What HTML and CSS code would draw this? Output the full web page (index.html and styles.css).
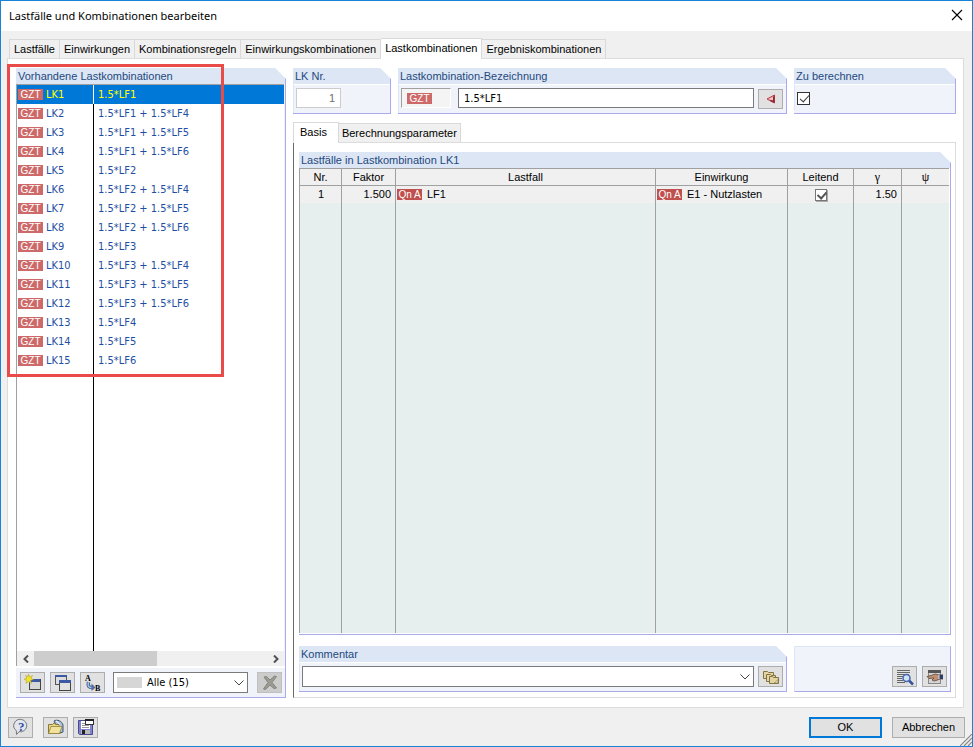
FILE: index.html
```html
<!DOCTYPE html>
<html lang="de">
<head>
  <meta charset="UTF-8">
  <meta name="viewport" content="width=device-width, initial-scale=1.0">
  <title>Lastfälle und Kombinationen bearbeiten</title>
  <link rel="stylesheet" href="styles.css">
</head>
<body>
  <div class="window">
    <header class="titlebar">
      <h1>Lastfälle und Kombinationen bearbeiten</h1>
      <button class="close" aria-label="Schließen">
        <svg width="12" height="12" viewBox="0 0 12 12"><path d="M1 1l10 10M11 1L1 11" stroke="#000" stroke-width="1.1" fill="none"/></svg>
      </button>
    </header>

    <nav class="tabs">
      <button class="tab">Lastfälle</button>
      <button class="tab">Einwirkungen</button>
      <button class="tab">Kombinationsregeln</button>
      <button class="tab">Einwirkungskombinationen</button>
      <button class="tab active">Lastkombinationen</button>
      <button class="tab">Ergebniskombinationen</button>
    </nav>

    <main class="page">
      <section class="group list-group">
        <h2>Vorhandene Lastkombinationen</h2>
        <div class="list">
          <table class="combos">
            <tr class="selected"><td><span class="badge">GZT</span>LK1</td><td>1.5*LF1</td></tr>
            <tr><td><span class="badge">GZT</span>LK2</td><td>1.5*LF1 + 1.5*LF4</td></tr>
            <tr><td><span class="badge">GZT</span>LK3</td><td>1.5*LF1 + 1.5*LF5</td></tr>
            <tr><td><span class="badge">GZT</span>LK4</td><td>1.5*LF1 + 1.5*LF6</td></tr>
            <tr><td><span class="badge">GZT</span>LK5</td><td>1.5*LF2</td></tr>
            <tr><td><span class="badge">GZT</span>LK6</td><td>1.5*LF2 + 1.5*LF4</td></tr>
            <tr><td><span class="badge">GZT</span>LK7</td><td>1.5*LF2 + 1.5*LF5</td></tr>
            <tr><td><span class="badge">GZT</span>LK8</td><td>1.5*LF2 + 1.5*LF6</td></tr>
            <tr><td><span class="badge">GZT</span>LK9</td><td>1.5*LF3</td></tr>
            <tr><td><span class="badge">GZT</span>LK10</td><td>1.5*LF3 + 1.5*LF4</td></tr>
            <tr><td><span class="badge">GZT</span>LK11</td><td>1.5*LF3 + 1.5*LF5</td></tr>
            <tr><td><span class="badge">GZT</span>LK12</td><td>1.5*LF3 + 1.5*LF6</td></tr>
            <tr><td><span class="badge">GZT</span>LK13</td><td>1.5*LF4</td></tr>
            <tr><td><span class="badge">GZT</span>LK14</td><td>1.5*LF5</td></tr>
            <tr><td><span class="badge">GZT</span>LK15</td><td>1.5*LF6</td></tr>
            <tr class="filler"><td></td><td></td></tr>
          </table>
          <div class="scrollbar">
            <button aria-label="Nach links"><svg width="6" height="8" viewBox="0 0 6 8"><path d="M5 0.5L1.5 4L5 7.5" fill="none" stroke="#505050" stroke-width="2"/></svg></button>
            <div class="track"><div class="thumb"></div></div>
            <button aria-label="Nach rechts"><svg width="6" height="8" viewBox="0 0 6 8"><path d="M1 0.5L4.5 4L1 7.5" fill="none" stroke="#505050" stroke-width="2"/></svg></button>
          </div>
        </div>
        <div class="list-tools">
          <button class="icon-btn" aria-label="Neu">
            <svg width="18" height="18" viewBox="0 0 18 18"><rect x="5.500" y="5.500" width="11" height="10" fill="#d6d6d6" stroke="#444"/><rect x="6" y="5" width="10" height="3" fill="#3b58a5"/><path d="M4.500 0l1 3 3-1.500-1.500 3 2.500 1-3 1 1 3-3-2-2.500 2 .5-3L0 5l3-.5L1.500 1.500l2.500 1z" fill="#f3e526" stroke="#a99a2c" stroke-width=".5"/></svg>
          </button>
          <button class="icon-btn" aria-label="Kopieren">
            <svg width="18" height="18" viewBox="0 0 18 18"><rect x="1.500" y="1.500" width="11" height="9" fill="#dcdcdc" stroke="#555"/><rect x="1" y="1" width="12" height="2" fill="#3b58a5"/><rect x="5.500" y="6.500" width="11" height="10" fill="#e1e1e1" stroke="#444"/><rect x="5" y="6" width="12" height="3" fill="#3b58a5"/></svg>
          </button>
          <button class="icon-btn" aria-label="Umbenennen">
            <svg width="18" height="18" viewBox="0 0 18 18"><text x="1" y="7" class="glyph">A</text><text x="11" y="17" class="glyph">B</text><path d="M4.500 8c-1 4 0 6 5 5.500" fill="none" stroke="#4c648f" stroke-width="3.500"/><path d="M4.500 8c-1 4 0 6 5 5.500" fill="none" stroke="#a9c0e6" stroke-width="1.500"/><path d="M7.500 9.500l4 4-4 3.500z" fill="#4c70ad"/></svg>
          </button>
          <div class="combo filter">
            <select aria-label="Filter"><option>Alle (15)</option></select>
            <span class="swatch"></span>
            <svg class="chevron" width="10" height="6" viewBox="0 0 10 6"><path d="M.5.5L5 5L9.500.5" fill="none" stroke="#444"/></svg>
          </div>
          <button class="icon-btn disabled" aria-label="Löschen" disabled>
            <svg width="18" height="18" viewBox="0 0 18 18"><path d="M3 3l2.500-.5L9 6l4.500-4 2 .5L11 8.500l4.500 5.500-2.500.5L9 11l-4.500 4.500-2-.5L7 8.500z" fill="#9b9b94" stroke="#85857e"/></svg>
          </button>
        </div>
      </section>

      <div class="details">
        <div class="row">
          <section class="group number-group">
            <h2><label for="lkNr">LK Nr.</label></h2>
            <div class="group-body">
              <input type="text" id="lkNr" class="number" value="1" disabled>
            </div>
          </section>
          <section class="group wide">
            <h2><label for="bezeichnung">Lastkombination-Bezeichnung</label></h2>
            <div class="group-body">
              <div class="type-box"><span class="badge">GZT</span></div>
              <input type="text" id="bezeichnung" class="name" value="1.5*LF1">
              <button class="icon-btn flat" aria-label="Übernehmen">
                <svg width="10" height="10" viewBox="0 0 10 10"><path d="M1 5L8.500 1V9z" fill="#eda3a3" stroke="#b9404a"/><path d="M8.500 1V9L4 7z" fill="#8e2632"/><path d="M3 5L7 3V6.500z" fill="#f6caca"/></svg>
              </button>
            </div>
          </section>
          <section class="group calc-group">
            <h2><label for="berechnen">Zu berechnen</label></h2>
            <div class="group-body">
              <input type="checkbox" id="berechnen" class="check" checked>
            </div>
          </section>
        </div>

        <nav class="tabs inner-tabs">
          <button class="tab active">Basis</button>
          <button class="tab">Berechnungsparameter</button>
        </nav>

        <div class="basis">
          <section class="group cases-group">
            <h2>Lastfälle in Lastkombination LK1</h2>
            <div class="cases-wrap">
              <table class="cases">
                <colgroup>
                  <col class="c-nr"><col class="c-faktor"><col><col class="c-einwirkung"><col class="c-leitend"><col class="c-gamma"><col class="c-psi">
                </colgroup>
                <thead>
                  <tr><th>Nr.</th><th>Faktor</th><th>Lastfall</th><th>Einwirkung</th><th>Leitend</th><th class="greek">γ</th><th class="greek">ψ</th></tr>
                </thead>
                <tbody>
                  <tr>
                    <td class="center">1</td>
                    <td class="num">1.500</td>
                    <td><span class="badge dark">Qn A</span>LF1</td>
                    <td><span class="badge dark">Qn A</span>E1 - Nutzlasten</td>
                    <td class="center"><input type="checkbox" class="check small" aria-label="Leitend" checked></td>
                    <td class="num">1.50</td>
                    <td></td>
                  </tr>
                  <tr class="filler"><td></td><td></td><td></td><td></td><td></td><td></td><td></td></tr>
                </tbody>
              </table>
            </div>
          </section>

          <div class="row">
            <section class="group wide">
              <h2><label for="kommentar">Kommentar</label></h2>
              <div class="group-body comment-body">
                <div class="combo">
                  <select id="kommentar"><option></option></select>
                  <svg class="chevron" width="10" height="6" viewBox="0 0 10 6"><path d="M.5.5L5 5L9.500.5" fill="none" stroke="#444"/></svg>
                </div>
                <button class="icon-btn" aria-label="Kommentare">
                  <svg width="18" height="18" viewBox="0 0 18 18"><g fill="#e3d5a3" stroke="#857442"><path d="M1.500 3.500h4l1 1h5v6h-10z"/><path d="M4.500 6.500h4l1 1h4v6h-9z"/><path d="M7.500 8.500h3l1 1h5v6h-9z"/></g><path d="M16 15h-3.500l3.500-3.500z" fill="#fff6c8" stroke="#857442" stroke-width=".7"/></svg>
                </button>
              </div>
            </section>
            <section class="group plain tools-group">
              <button class="icon-btn" aria-label="Details">
                <svg width="18" height="18" viewBox="0 0 18 18"><path d="M1 2.500h13M1 4.500h13M1 6.500h12M1 8.500h6M1 10.500h5M1 12.500h6M1 14.500h8" stroke="#666" stroke-width="1"/><path d="M13 12.500l4 4" stroke="#36549e" stroke-width="2.500"/><circle cx="10.500" cy="10" r="3.500" fill="#cfe2f6" stroke="#4767ae" stroke-width="1.500"/></svg>
              </button>
              <button class="icon-btn" aria-label="Einstellungen">
                <svg width="18" height="18" viewBox="0 0 18 18"><rect x="2.500" y="2.500" width="12" height="13" fill="#d5d5d5" stroke="#888"/><rect x="2" y="2" width="13" height="3" fill="#555"/><path d="M1 8.500L5 7.500 9 6l5 1v4l-4 1.500-2 .5-2-1 2-2-5 .5z" fill="#bd8f73" stroke="#63463a" stroke-width=".8"/><path d="M13 6.500l4 0v5l-4-.5z" fill="#2f3c68"/><path d="M13 6.500v4.500" stroke="#dde"/></svg>
              </button>
            </section>
          </div>
        </div>
      </div>
    </main>

    <footer class="footer">
      <button class="icon-btn help" aria-label="Hilfe">
        <svg width="18" height="18" viewBox="0 0 18 18"><path d="M9.500 1.500a6.500 6.200 0 1 1-2.500 12.200L4.500 16.500l-.2-4A6.500 6.200 0 0 1 9.500 1.500z" fill="#e2e6ee" stroke="#777"/><text x="6" y="13" class="question">?</text></svg>
      </button>
      <button class="icon-btn" aria-label="Öffnen">
        <svg width="18" height="18" viewBox="0 0 18 18"><path d="M7 3c3-2 8 0 9 4l0 7-3 1z" fill="#a9bfd8" stroke="#3d5474"/><path d="M9 3c3 1 4 4 4.500 8" fill="none" stroke="#fff"/><path d="M1.500 15.500v-9h4l1.500-1.500 2 1.500h3l1 9z" fill="#e6d583" stroke="#8a7837"/><path d="M1.500 15.500L4 8.500h11l-2.500 7z" fill="#f0e29a" stroke="#8a7837" stroke-width=".7"/></svg>
      </button>
      <button class="icon-btn" aria-label="Speichern">
        <svg width="18" height="18" viewBox="0 0 18 18"><path d="M1.500 2.500h14v14h-13l-1-1z" fill="#8082cf" stroke="#484a8c"/><rect x="4" y="3" width="9" height="8" fill="#fff"/><path d="M5 5.500h7M5 7.500h7M5 9.500h7" stroke="#999"/><rect x="4" y="12" width="9" height="4" fill="#bbb"/><rect x="5" y="12" width="3" height="4" fill="#222"/><rect x="8.500" y="1.500" width="8" height="5" fill="#fff" stroke="#333"/><rect x="8" y="1" width="9" height="2" fill="#222"/></svg>
      </button>
      <span class="spacer"></span>
      <button class="btn default">OK</button>
      <button class="btn">Abbrechen</button>
      <svg class="grip" width="12" height="12" viewBox="0 0 12 12"><path d="M0 12L12 0M4 12L12 4M8 12L12 8" stroke="#888" stroke-width="1.200"/></svg>
    </footer>

    <div class="highlight"></div>
  </div>
</body>
</html>
```
FILE: styles.css
```css
* {
  box-sizing: border-box;
}
body {
  margin: 0;
  font-family: "Liberation Sans", Arial, sans-serif;
  font-size: 11px;
  color: #000;
}
button, input, select {
  font-family: inherit;
  font-size: inherit;
  color: inherit;
  margin: 0;
  padding: 0;
  border-radius: 0;
}
button svg {
  display: block;
}
h1, h2 {
  margin: 0;
  font-weight: normal;
}
table {
  border-collapse: separate;
  border-spacing: 0;
}
td, th {
  padding: 0;
  font-weight: normal;
}
.window {
  position: relative;
  display: flex;
  flex-direction: column;
  min-height: 100vh;
  border: 1px solid #1883d7;
  background: #f0f0f0;
}
.titlebar {
  display: flex;
  align-items: center;
  justify-content: space-between;
  height: 30px;
  padding: 0 9px 2px 8px;
  background: #fff;
}
.titlebar h1 {
  font-family: "Noto Sans", sans-serif;
  font-size: 11px;
}
.close {
  border: none;
  background: none;
}

/* tabs */
.tabs {
  display: flex;
  align-items: flex-end;
  height: 27px;
  padding-left: 8px;
}
.tab {
  height: 19px;
  padding: 0 4px;
  border: 1px solid #d9d9d9;
  border-bottom: none;
  background: #f0f0f0;
  white-space: nowrap;
}
.tab + .tab {
  border-left: none;
}
.tab.active {
  position: relative;
  z-index: 1;
  height: 21px;
  margin-bottom: -1px;
  padding: 0 4px 2px;
  background: #fff;
}
.page {
  flex: 1;
  display: flex;
  gap: 7px;
  margin: 0 8px 0 6px;
  padding: 9px 7px 9px 8px;
  border: 1px solid #dcdcdc;
  background: #fff;
}

/* groups */
.group {
  display: flex;
  flex-direction: column;
  border-right: 1px solid #a9a9ec;
  border-bottom: 1px solid #a9a9ec;
  background: #f0f4fa;
  clip-path: polygon(0 0, calc(100% - 11px) 0, 100% 11px, 100% 100%, 0 100%);
}
.group h2 {
  height: 16px;
  padding-left: 2px;
  background: #dce6f5;
  font-size: 11px;
  line-height: 16px;
  color: #1f497d;
}
.group-body {
  display: flex;
  align-items: flex-start;
  padding: 3px 3px 5px 2px;
  border-top: 1px solid #fff;
  border-left: 1px solid #dce6f5;
}
.group.plain {
  clip-path: none;
  border-top: 1px solid #dce6f5;
  border-left: 1px solid #dce6f5;
}
.row {
  display: flex;
  gap: 7px;
}
.wide {
  flex: 1;
}
.badge {
  display: inline-block;
  width: 25px;
  height: 11px;
  margin-right: 3px;
  background: #cd6a69;
  color: #fff;
  font-family: "Liberation Sans", Arial, sans-serif;
  font-size: 10px;
  line-height: 11px;
  text-align: center;
}
.badge.dark {
  margin-right: 5px;
  background: #c0504d;
}

/* left list */
.list-group {
  width: 270px;
}
.list {
  flex: 1;
  display: flex;
  flex-direction: column;
  margin-right: 1px;
  border-top: 1px solid #a0a0a0;
  border-left: 1px solid #a0a0a0;
  background: #fff;
}
.combos {
  flex: 1;
  width: 100%;
  height: 565px;
  color: #1f4fa3;
  font-family: "DejaVu Sans Condensed", "DejaVu Sans", sans-serif;
}
.combos td {
  height: 19px;
  padding-left: 4px;
}
.combos td:first-child {
  width: 77px;
  padding-left: 1px;
  border-right: 1px solid #000;
}
.combos .filler td,
.cases .filler td {
  height: auto;
}
.combos .selected {
  background: #0078d7;
  color: #ff0;
}
.combos .selected td:first-child {
  border-right-color: #fff;
}
.scrollbar {
  display: flex;
  height: 15px;
  background: #f0f0f0;
}
.scrollbar button {
  display: flex;
  align-items: center;
  justify-content: center;
  width: 17px;
  border: none;
  background: none;
}
.track {
  flex: 1;
}
.thumb {
  width: 53%;
  height: 15px;
  background: #cdcdcd;
}
.list-tools {
  display: flex;
  align-items: center;
  gap: 5px;
  height: 31px;
  padding: 0 3px 0 4px;
  border-top: 2px solid #fff;
}
.icon-btn {
  display: flex;
  align-items: center;
  justify-content: center;
  flex: none;
  width: 25px;
  height: 21px;
  border: 1px solid #adadad;
  background: #e1e1e1;
}
.icon-btn.disabled {
  margin-left: 4px;
  border-color: #bfbfbf;
  background: #ccc;
}
.glyph {
  font: bold 8px "Liberation Serif", serif;
}
.question {
  font: bold 13px "Liberation Serif", serif;
  fill: #3850a0;
}
.combo {
  position: relative;
  flex: 1;
}
.combo select {
  display: block;
  width: 100%;
  height: 21px;
  padding-left: 4px;
  border: 1px solid #7a7a7a;
  background: #fff;
  appearance: none;
}
.filter {
  margin-left: 3px;
}
.filter select {
  padding-left: 33px;
  font-family: "DejaVu Sans Condensed", "DejaVu Sans", sans-serif;
}
.swatch {
  position: absolute;
  top: 5px;
  left: 4px;
  width: 25px;
  height: 11px;
  background: #d6d6d6;
}
.chevron {
  position: absolute;
  top: 8px;
  right: 4px;
  pointer-events: none;
}

/* right side */
.details {
  flex: 1;
  display: flex;
  flex-direction: column;
}
.number-group {
  width: 98px;
}
.calc-group {
  width: 162px;
}
.number {
  width: 45px;
  height: 20px;
  padding-right: 5px;
  border: 1px solid #ccc;
  background: #fff;
  color: #6d6d6d;
  text-align: right;
}
.type-box {
  display: flex;
  align-items: center;
  width: 50px;
  height: 20px;
  padding-left: 5px;
  border: 1px solid #fff;
  border-top-color: #a0a0a0;
  border-left-color: #a0a0a0;
  background: #f4f4f4;
}
.name {
  flex: 1;
  min-width: 0;
  height: 20px;
  margin: 0 4px 0 7px;
  padding-left: 5px;
  border: 1px solid #7a7a7a;
  background: #fff;
  font-family: "DejaVu Sans Condensed", "DejaVu Sans", sans-serif;
}
.icon-btn.flat {
  height: 20px;
  margin-top: 1px;
}
.wide .group-body {
  height: 29px;
}
.check {
  width: 13px;
  height: 13px;
  margin-top: 4px;
  border: 1px solid #333;
  background: #fff;
  appearance: none;
}
.check:checked::before {
  content: "";
  display: block;
  width: 4px;
  height: 8px;
  margin: 0 0 0 4px;
  border: solid #333;
  border-width: 0 1px 1px 0;
  transform: rotate(42deg);
}
.check.small {
  display: block;
  width: 12px;
  height: 12px;
  margin: 0 auto;
  border-color: #777;
  box-shadow: 1px 1px 0 #aaa;
}
.check.small:checked::before {
  height: 7px;
  margin-left: 3px;
  border-color: #555;
  border-width: 0 2px 2px 0;
}
.inner-tabs {
  height: 28px;
  padding-left: 0;
}
.inner-tabs .tab {
  padding: 0 3px;
}
.inner-tabs .active {
  padding: 0 11px 2px 6px;
}
.basis {
  flex: 1;
  display: flex;
  flex-direction: column;
  gap: 11px;
  padding: 9px 4px 5px 5px;
  border: 1px solid #dcdcdc;
  border-left-color: #696969;
}
.cases-group {
  flex: 1;
}
.cases-wrap {
  flex: 1;
  display: flex;
  padding: 0 1px 1px 0;
  background: #fff;
}
.cases {
  flex: 1;
  width: 100%;
  table-layout: fixed;
  border-top: 1px solid #a0a0a0;
  border-left: 1px solid #a0a0a0;
  background: #e7eeee;
}
.c-nr { width: 42px; }
.c-faktor { width: 54px; }
.c-einwirkung { width: 132px; }
.c-leitend { width: 66px; }
.c-gamma { width: 48px; }
.c-psi { width: 47px; }
.cases th {
  height: 17px;
  border-right: 1px solid #a0a0a0;
  border-bottom: 1px solid #a0a0a0;
  background: #f0f0f0;
}
.cases td {
  height: 17px;
  padding-left: 1px;
  border-right: 1px solid #a0a0a0;
  line-height: 15px;
}
.cases th:last-child,
.cases td:last-child {
  border-right: none;
}
.cases tbody tr:first-child {
  background: #f0f0f0;
}
.cases .center {
  text-align: center;
}
.cases .num {
  padding-right: 4px;
  text-align: right;
}
.cases .greek {
  font-family: "Liberation Serif", serif;
  font-size: 12px;
  line-height: 12px;
}
.comment-body {
  gap: 4px;
}
.tools-group {
  flex-direction: row;
  align-items: flex-end;
  justify-content: flex-end;
  gap: 5px;
  width: 157px;
  padding: 0 3px 4px;
}

/* bottom bar */
.footer {
  position: relative;
  display: flex;
  align-items: center;
  height: 38px;
  padding: 0 7px;
  gap: 5px;
}
.help {
  margin-right: 5px;
}
.spacer {
  flex: 1;
}
.btn {
  width: 73px;
  height: 21px;
  border: 1px solid #adadad;
  background: #e1e1e1;
}
.btn.default {
  margin-right: 5px;
  border: 2px solid #0078d7;
}
.grip {
  position: absolute;
  right: 0;
  bottom: 0;
}

/* marker around the combination list */
.highlight {
  position: absolute;
  top: 63px;
  left: 6px;
  width: 217px;
  height: 313px;
  border: 3px solid #e94b48;
  pointer-events: none;
}
```
